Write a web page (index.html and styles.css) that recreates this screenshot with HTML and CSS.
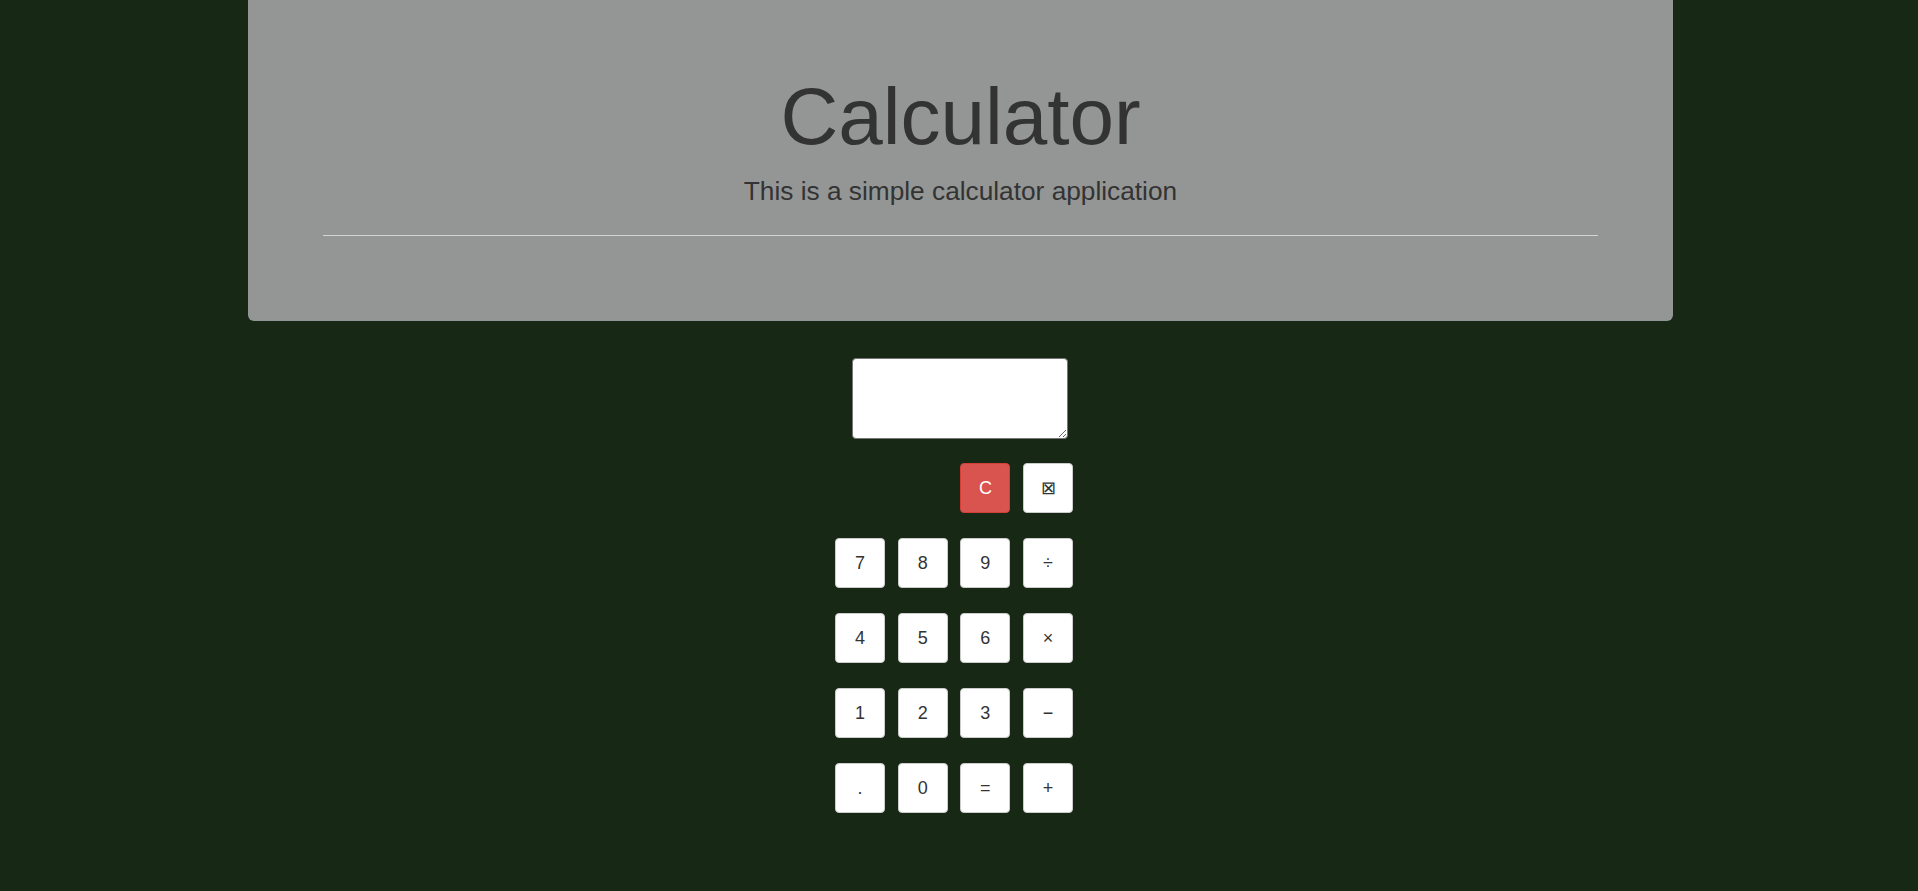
FILE: index.html
```html
<!DOCTYPE html>
<html lang="en">
<head>
<meta charset="utf-8">
<title>Calculator</title>
<link rel="stylesheet" href="styles.css">
</head>
<body>
<div class="jumbotron">
  <h1 class="title">Calculator</h1>
  <p class="lead">This is a simple calculator application</p>
  <hr class="rule">
</div>
<div class="calc">
  <textarea class="display"></textarea>
  <div class="keys">
    <button class="key key-danger key-c">C</button>
    <button class="key">&#x22A0;</button>
    <button class="key">7</button>
    <button class="key">8</button>
    <button class="key">9</button>
    <button class="key">&#xF7;</button>
    <button class="key">4</button>
    <button class="key">5</button>
    <button class="key">6</button>
    <button class="key">&#xD7;</button>
    <button class="key">1</button>
    <button class="key">2</button>
    <button class="key">3</button>
    <button class="key">&#x2212;</button>
    <button class="key">.</button>
    <button class="key">0</button>
    <button class="key">=</button>
    <button class="key">+</button>
  </div>
</div>
</body>
</html>
```

FILE: styles.css
```css
html, body {
  margin: 0;
  padding: 0;
}
body {
  background: #172915;
  font-family: "Liberation Sans", Arial, sans-serif;
  color: #333;
  min-height: 891px;
}
.jumbotron {
  width: 1425px;
  margin-left: 248px;
  box-sizing: border-box;
  padding: 73px 75px 85px;
  background: #939695;
  border-radius: 0 0 6px 6px;
  text-align: center;
}
.title {
  margin: 0;
  font-size: 80px;
  font-weight: 400;
  line-height: 88px;
  color: #333;
}
.lead {
  margin: 12px 0 0;
  font-size: 26.25px;
  line-height: 36px;
  color: #333;
}
.rule {
  margin: 26px 0 0;
  border: 0;
  border-top: 1px solid #d3d5d4;
  height: 0;
}
.calc {
  padding-top: 37px;
}
.display {
  display: block;
  box-sizing: border-box;
  width: 216px;
  height: 81px;
  margin-left: 852px;
  border: 1px solid #767676;
  border-radius: 4px;
  background: #fff;
  resize: both;
}
.keys {
  margin: 24px 0 0 835px;
  display: grid;
  grid-template-columns: repeat(4, 50px);
  column-gap: 12.7px;
  row-gap: 25px;
  width: max-content;
}
.key {
  box-sizing: border-box;
  width: 50px;
  height: 50px;
  padding: 0;
  border: 1px solid #ccc;
  border-radius: 4px;
  background: #fff;
  color: #333;
  font-family: "Liberation Sans", Arial, sans-serif;
  font-size: 18px;
}
.key-c {
  grid-column: 3;
}
.key-danger {
  background: #d9534f;
  border-color: #d43f3a;
  color: #fff;
}
```
